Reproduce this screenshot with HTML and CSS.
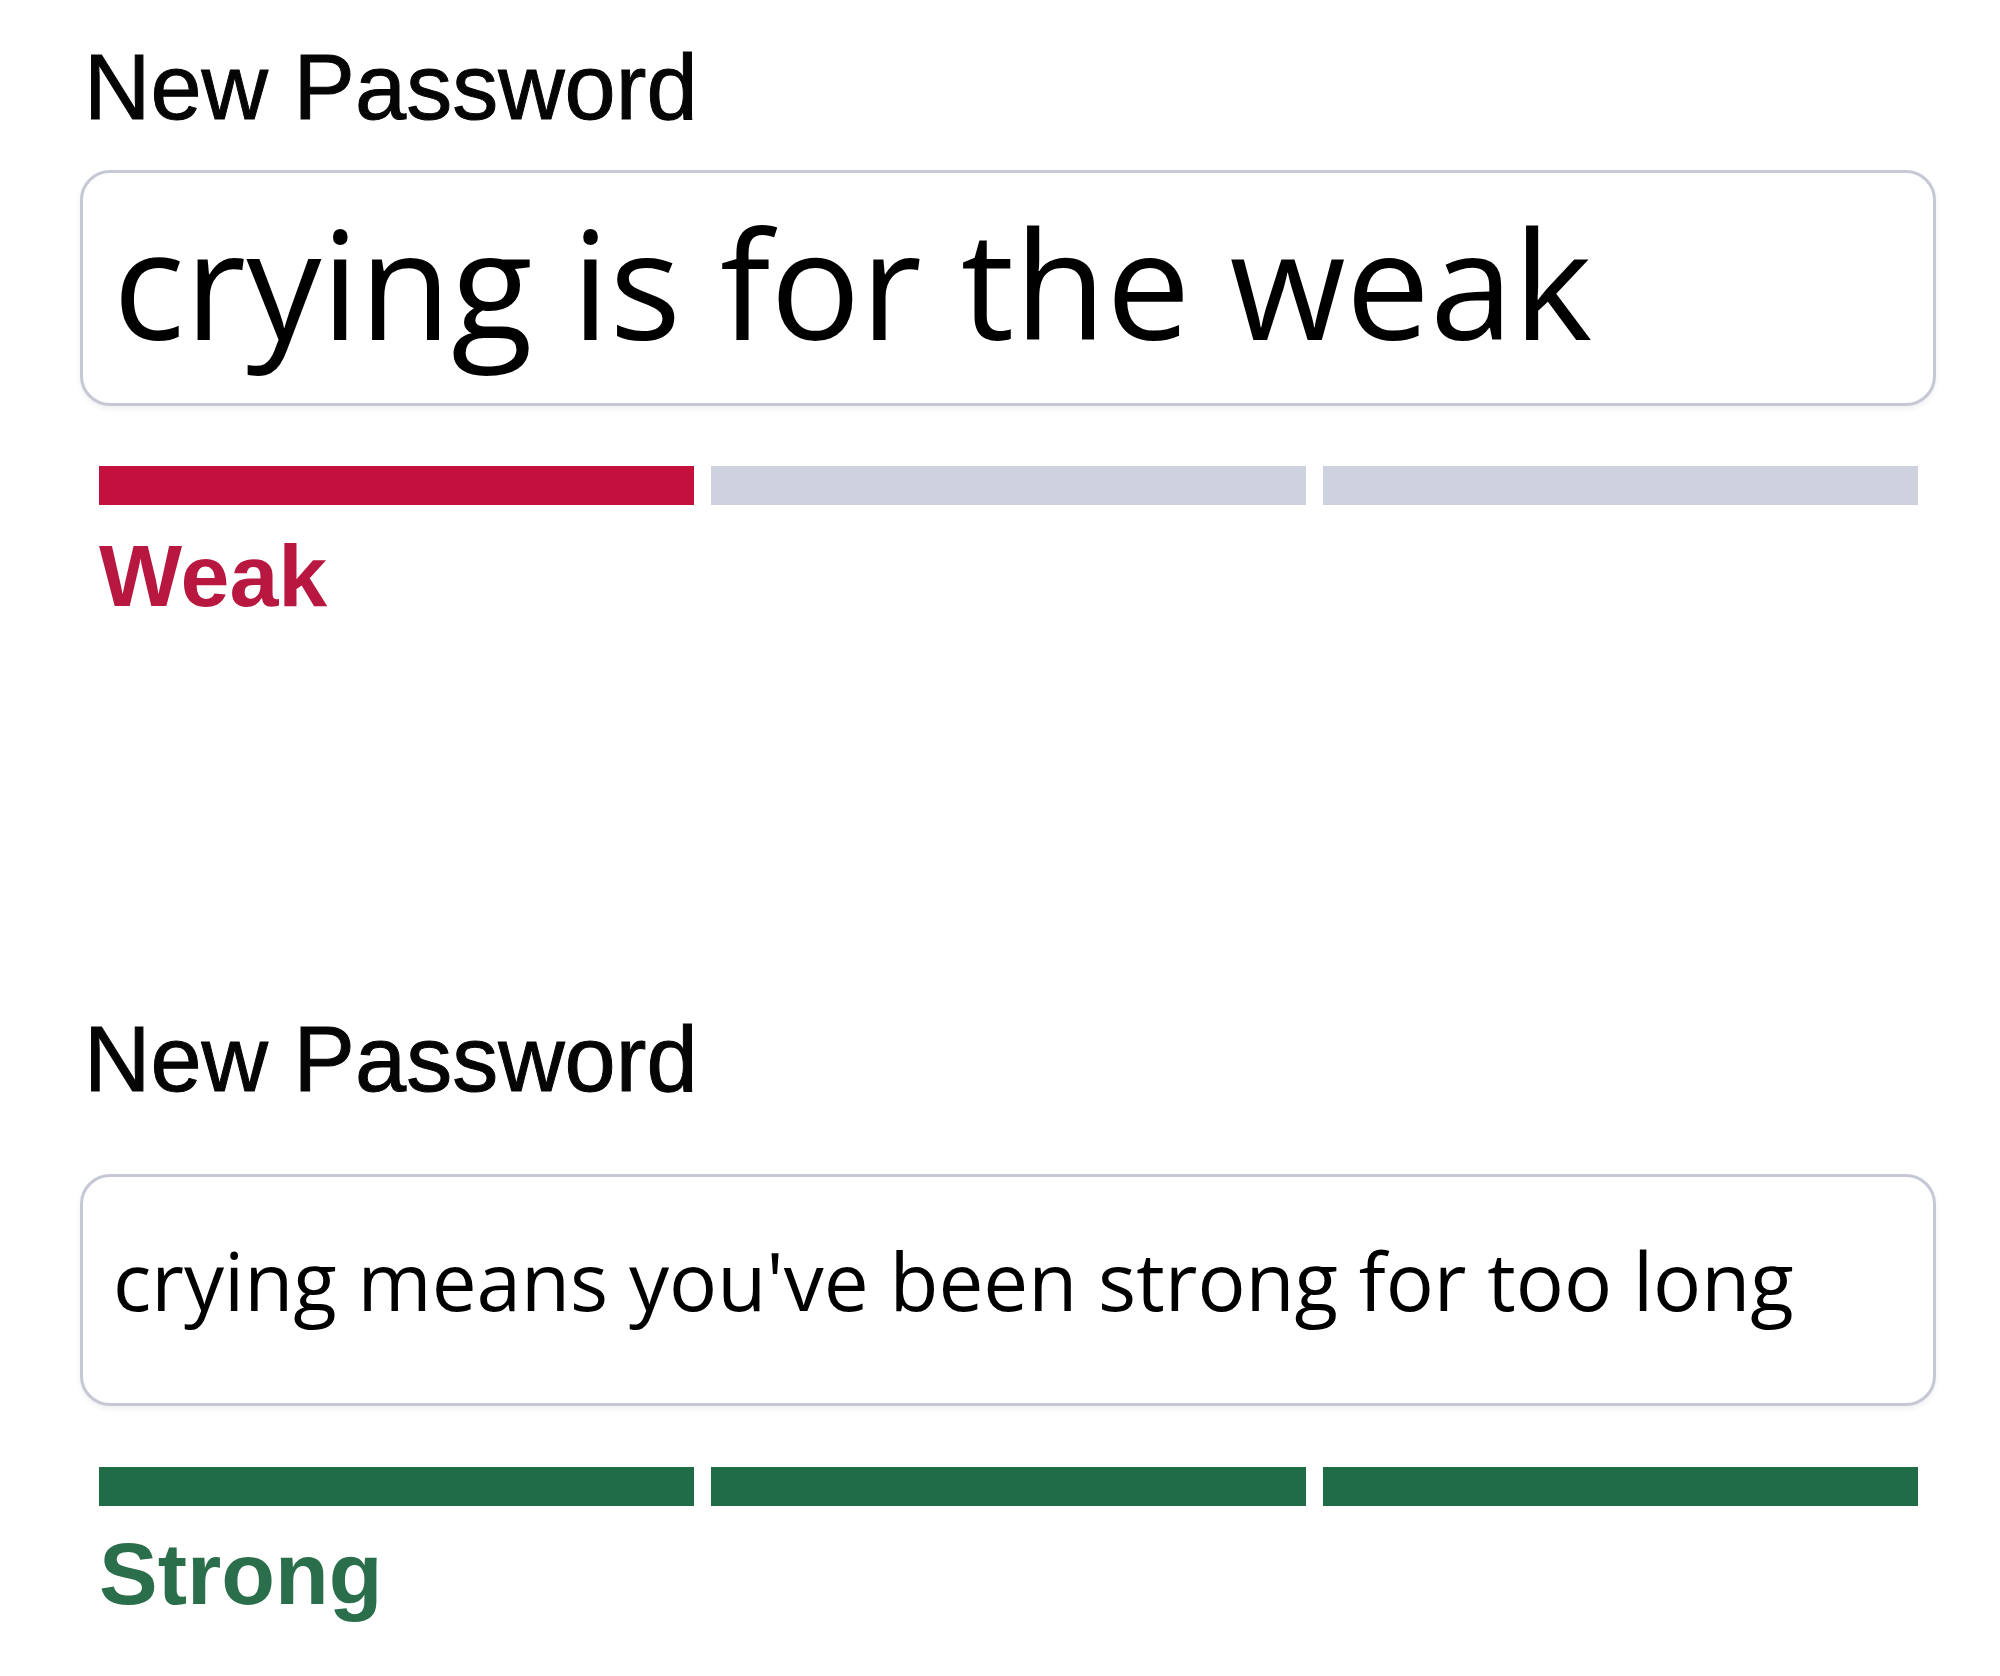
FILE: index.html
```html
<!DOCTYPE html>
<html lang="en">
<head>
<meta charset="UTF-8">
<meta name="viewport" content="width=device-width, initial-scale=1.0">
<title>Password Strength</title>
<link rel="stylesheet" href="styles.css">
</head>
<body>
    <div class="page">
        <!-- weak example -->
        <div class="field">
            <label class="field-label" for="pw-weak">New Password</label>
            <input class="field-input big" id="pw-weak" type="text" value="crying is for the weak" readonly>
            <div class="meter">
                <span class="seg weak"></span>
                <span class="seg"></span>
                <span class="seg"></span>
            </div>
            <p class="strength weak-text">Weak</p>
        </div>

        <!-- strong example -->
        <div class="field second">
            <label class="field-label" for="pw-strong">New Password</label>
            <input class="field-input small" id="pw-strong" type="text" value="crying means you've been strong for too long" readonly>
            <div class="meter">
                <span class="seg strong"></span>
                <span class="seg strong"></span>
                <span class="seg strong"></span>
            </div>
            <p class="strength strong-text">Strong</p>
        </div>
    </div>
</body>
</html>
```

FILE: styles.css
```css
body {
    margin: 0;
    background: #fff;
    font-family: "Liberation Sans", Arial, sans-serif;
    color: #000;
}
.page {
    width: 1856px;
    padding: 35px 0 0 80px;
}
.field {
    display: flex;
    flex-direction: column;
}
.field.second {
    margin-top: 381px;
}
.field-label {
    display: block;
    padding-left: 4px;
    font-size: 92px;
    line-height: 104px;
    color: #050505;
    -webkit-text-stroke: 1px #050505;
}
.field-input {
    display: block;
    box-sizing: border-box;
    width: 1856px;
    margin: 31px 0 0 0;
    padding: 0 30px 12px 30px;
    height: 236px;
    border: 3px solid #c6c8d6;
    border-radius: 30px;
    box-shadow: 0 3px 5px rgba(60, 60, 90, 0.08);
    background: #fff;
    font-family: "Open Sans", "Noto Sans", sans-serif;
    font-size: 150px;
    color: #000;
    outline: none;
}
.field-input.small {
    margin-top: 63px;
    height: 232px;
    padding-bottom: 22px;
    font-size: 80px;
}
.meter {
    display: flex;
    gap: 17px;
    margin: 60px 18px 0 19px;
}
.second .meter {
    margin-top: 61px;
}
.seg {
    flex: 1;
    height: 39px;
    background: #cdd2de;
}
.seg.weak {
    background: #c4103d;
}
.seg.strong {
    background: #216c48;
}
.strength {
    margin: 21px 0 0 19px;
    font-size: 88px;
    line-height: 100px;
    font-weight: bold;
}
.second .strength {
    margin-top: 18px;
}
.weak-text {
    color: #b8173f;
}
.strong-text {
    color: #2a6e4b;
}
```
